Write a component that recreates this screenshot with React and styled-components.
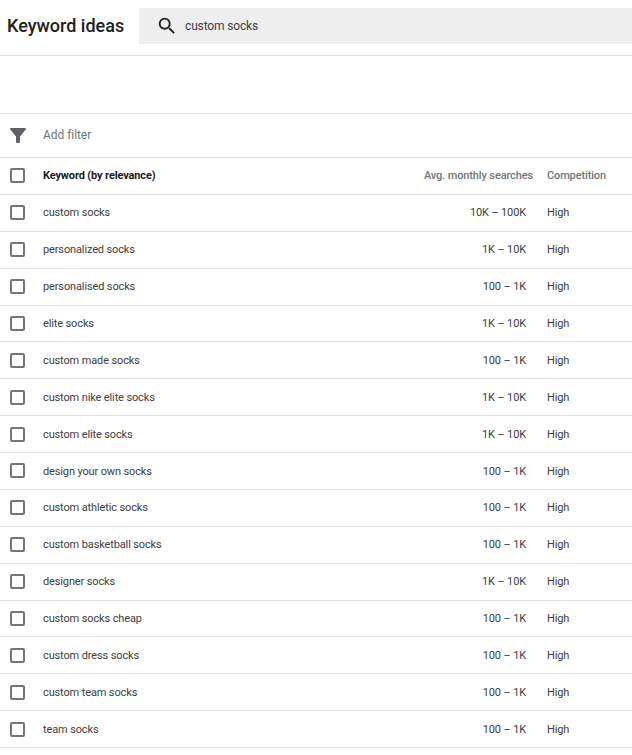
import React from 'react'
import styled, { createGlobalStyle } from 'styled-components'

const GlobalStyle = createGlobalStyle`
  html, body { margin: 0; padding: 0; background: #fff; }
  body { font-family: Roboto, "Liberation Sans", sans-serif; }
`

const rows = [
  ['custom socks', '10K – 100K'],
  ['personalized socks', '1K – 10K'],
  ['personalised socks', '100 – 1K'],
  ['elite socks', '1K – 10K'],
  ['custom made socks', '100 – 1K'],
  ['custom nike elite socks', '1K – 10K'],
  ['custom elite socks', '1K – 10K'],
  ['design your own socks', '100 – 1K'],
  ['custom athletic socks', '100 – 1K'],
  ['custom basketball socks', '100 – 1K'],
  ['designer socks', '1K – 10K'],
  ['custom socks cheap', '100 – 1K'],
  ['custom dress socks', '100 – 1K'],
  ['custom team socks', '100 – 1K'],
  ['team socks', '100 – 1K'],
]

const Page = styled.div`
  width: 632px;
  height: 755px;
  overflow: hidden;
`

const Header = styled.header`
  display: flex;
  align-items: flex-start;
  height: 55px;
  border-bottom: 1px solid #e0e0e0;
`

const Title = styled.h1`
  margin: 0;
  width: 132px;
  padding-left: 7px;
  font-size: 18px;
  font-weight: 500;
  line-height: 52px;
  color: #202124;
  white-space: nowrap;
`

const SearchBox = styled.div`
  flex: 1;
  display: flex;
  align-items: center;
  gap: 7px;
  height: 36px;
  margin-top: 8px;
  padding-left: 17px;
  background: #eeeeee;
  font-size: 12px;
  letter-spacing: -0.15px;
  color: #3c4043;
`

const Spacer = styled.div`
  height: 57px;
  border-bottom: 1px solid #e0e0e0;
`

const FilterBar = styled.div`
  display: flex;
  align-items: center;
  height: 43px;
  border-bottom: 1px solid #e0e0e0;
`

const FilterIcon = styled.div`
  display: flex;
  justify-content: center;
  width: 36px;
  padding-bottom: 1px;
`

const AddFilter = styled.span`
  margin-left: 7px;
  padding-bottom: 2px;
  font-size: 12px;
  letter-spacing: -0.05px;
  color: #70757a;
`

const Row = styled.div`
  display: grid;
  grid-template-columns: 43px 1fr 123px 99px;
  align-items: center;
  height: ${p => (p.$head ? '36.9px' : '36.889px')};
  box-sizing: border-box;
  border-bottom: 1px solid #e0e0e0;
  font-size: 11px;
  letter-spacing: -0.13px;
  color: #3c4043;
`

const Box = styled.span`
  display: block;
  width: 11px;
  height: 11px;
  margin-left: 10px;
  border: 2px solid #757575;
  border-radius: 2px;
`

const Keyword = styled.span`
  padding: ${p => (p.$head ? '0 0 1px' : '0.2px 0 0')};
  font-weight: ${p => (p.$head ? 700 : 400)};
  color: ${p => (p.$head ? '#202124' : '#3c4043')};
`

const Volume = styled.span`
  padding: ${p => (p.$head ? '0 0 1px' : '0.2px 7px 0 0')};
  text-align: right;
  white-space: nowrap;
  color: ${p => (p.$head ? '#70757a' : '#3c4043')};
  font-weight: ${p => (p.$head ? 500 : 400)};
`

const Competition = styled.span`
  padding: ${p => (p.$head ? '0 0 1px 14px' : '0.2px 0 0 14px')};
  color: ${p => (p.$head ? '#70757a' : '#3c4043')};
  font-weight: ${p => (p.$head ? 500 : 400)};
`

const SearchIcon = () => (
  <svg width="22" height="22" viewBox="0 0 24 24" fill="#202124">
    <path d="M15.5 14h-.79l-.28-.27A6.47 6.47 0 0 0 16 9.5 6.5 6.5 0 1 0 9.5 16c1.61 0 3.09-.59 4.23-1.57l.27.28v.79l5 4.99L20.49 19l-4.99-5zm-6 0C7.01 14 5 11.99 5 9.5S7.01 5 9.5 5 14 7.01 14 9.5 11.99 14 9.5 14z" />
  </svg>
)

const Funnel = () => (
  <svg width="16" height="15" viewBox="4 4 16 16" preserveAspectRatio="none" fill="#5f6368">
    <path d="M4.25 5.61C6.27 8.2 10 13 10 13v6c0 .55.45 1 1 1h2c.55 0 1-.45 1-1v-6s3.72-4.8 5.74-7.39C20.25 4.95 19.78 4 18.95 4H5.04c-.83 0-1.3.95-.79 1.61z" />
  </svg>
)

export default function App() {
  return (
    <Page>
      <GlobalStyle />
      <Header>
        <Title>Keyword ideas</Title>
        <SearchBox>
          <SearchIcon />
          custom socks
        </SearchBox>
      </Header>
      <Spacer />
      <FilterBar>
        <FilterIcon><Funnel /></FilterIcon>
        <AddFilter>Add filter</AddFilter>
      </FilterBar>
      <Row $head>
        <Box />
        <Keyword $head>Keyword (by relevance)</Keyword>
        <Volume $head>Avg. monthly searches</Volume>
        <Competition $head>Competition</Competition>
      </Row>
      {rows.map(([keyword, volume]) => (
        <Row key={keyword}>
          <Box />
          <Keyword>{keyword}</Keyword>
          <Volume>{volume}</Volume>
          <Competition>High</Competition>
        </Row>
      ))}
    </Page>
  )
}
